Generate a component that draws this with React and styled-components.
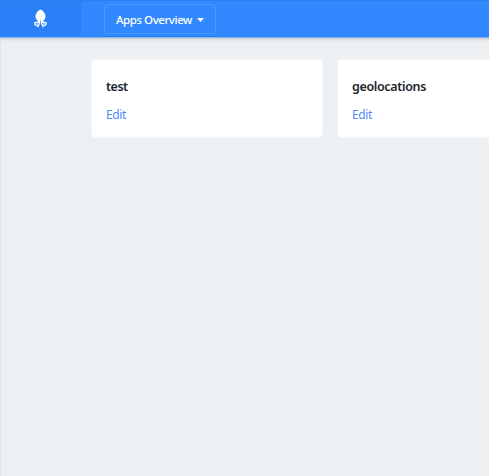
import React from 'react';
import styled, { createGlobalStyle } from 'styled-components';

const GlobalStyle = createGlobalStyle`
  * { box-sizing: border-box; }
  body {
    margin: 0;
    overflow: hidden;
    background: #ecf0f3;
    font-family: "Noto Sans", "Open Sans", sans-serif;
  }
`;

const Page = styled.div`
  height: 100vh;
  overflow: hidden;
  box-shadow: inset 1px 0 #dfe4e8;
`;

const Header = styled.header`
  display: flex;
  height: 38px;
  background: #3288ff;
  border-top: 1px solid #2f80ed;
  border-bottom: 1px solid #8db9ee;
  box-shadow: inset 0 -1px #2381fb, 0 1px #d0d1d2, 0 2px #dfe2e4, 0 3px #e6e9ec;
`;

const Brand = styled.a`
  display: flex;
  align-items: center;
  justify-content: center;
  width: 81px;
  height: 35px;
  background: #287ff6;
`;

const Logo = styled.svg`
  width: 14px;
  height: 20px;
`;

const MenuButton = styled.button`
  display: flex;
  align-items: center;
  gap: 5px;
  width: 112px;
  height: 30px;
  margin: 3px 0 0 23px;
  padding: 1px 0 0 11px;
  border: 1px solid #4b96ff;
  border-radius: 3px;
  background: transparent;
  color: #fff;
  font: 500 11.5px/18px "Noto Sans", "Open Sans", sans-serif;
  letter-spacing: -0.45px;
  white-space: nowrap;
`;

const MenuLabel = styled.span`
  width: 76px;
  text-align: left;
`;

const Caret = styled.svg`
  width: 7px;
  height: 4px;
`;

const Apps = styled.main`
  display: grid;
  grid-template-columns: 232px 232px;
  gap: 14px;
  padding: 21px 0 0 91px;
`;

const Card = styled.article`
  height: 79px;
  padding: 18px 15px;
  border: 1px solid #f3f5f7;
  border-radius: 3px;
  background: #fff;
  background-clip: padding-box;
`;

const AppName = styled.h2`
  margin: 0 0 10px -1px;
  color: #212529;
  font-size: 12.5px;
  font-weight: 600;
  line-height: 18px;
  letter-spacing: ${({ $tracking }) => $tracking};
`;

const EditLink = styled.a`
  display: block;
  margin-left: -1px;
  color: #5189fa;
  font-size: 12px;
  line-height: 18px;
  letter-spacing: -0.4px;
`;

const apps = [
  { name: 'test', tracking: '-0.5px' },
  { name: 'geolocations', tracking: '-0.35px' },
];

export default function App() {
  return (
    <>
      <GlobalStyle />
      <Page>
        <Header>
          <Brand aria-label="Home">
            <Logo viewBox="0 0 14 20">
              <path fill="#fff" d="M6.5.5C4 1.5 1.500 4.500 1.500 7.300c0 1.800.9 3.200 2.100 4.200h5.800c1.200-1 2.100-2.400 2.100-4.200C11.500 4.500 9 1.500 6.500.5Z" />
              <path fill="none" stroke="#fff" strokeWidth="1.300" strokeLinecap="round" d="M4.300 11v2c-.3 1-2.400-.2-3.200.5-.8 1 0 2.800 1.200 3M8.700 11v2c.3 1 2.400-.2 3.200.5.8 1 0 2.800-1.200 3M5.500 11v3c0 1.400-1.500 1.800-1.500 3.800M7.500 11v3c0 1.400 1.500 1.800 1.500 3.800" />
              <path fill="none" stroke="#d5e7ff" d="M3.200 13.500v3.500M9.800 13.500v3.500" />
            </Logo>
          </Brand>
          <MenuButton>
            <MenuLabel>Apps Overview</MenuLabel>
            <Caret viewBox="0 0 7 4"><path fill="#fff" d="M0 0h7L3.5 4Z" /></Caret>
          </MenuButton>
        </Header>
        <Apps>
          {apps.map(({ name, tracking }) => (
            <Card key={name}>
              <AppName $tracking={tracking}>{name}</AppName>
              <EditLink>Edit</EditLink>
            </Card>
          ))}
        </Apps>
      </Page>
    </>
  );
}
